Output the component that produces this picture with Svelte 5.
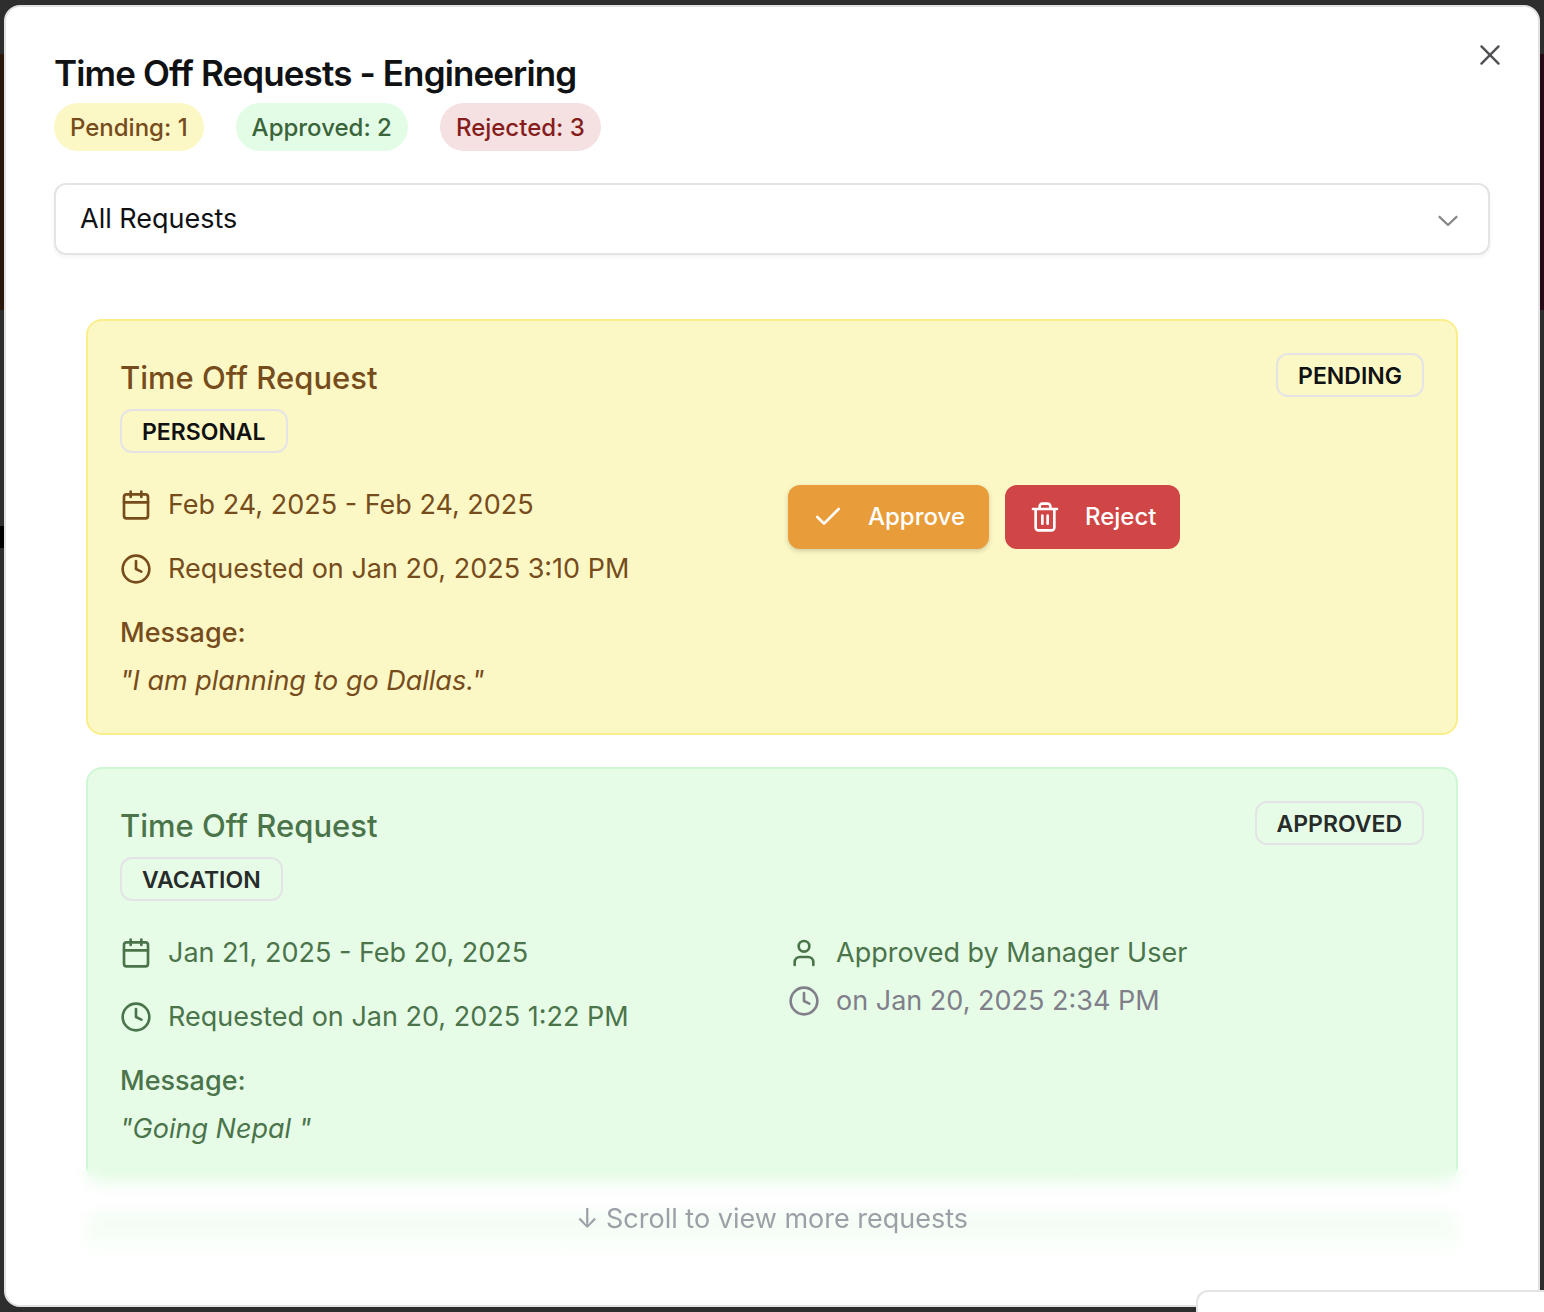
<script lang="ts">
  type Status = 'pending' | 'approved';
  type IconName = 'calendar' | 'clock' | 'user' | 'check' | 'trash';

  const counts = [
    { tone: 'pending', label: 'Pending: 1' },
    { tone: 'approved', label: 'Approved: 2' },
    { tone: 'rejected', label: 'Rejected: 3' }
  ];

  const requests: {
    status: Status;
    kind: string;
    dates: string;
    requested: string;
    message: string;
    reviewer?: string;
    reviewed?: string;
  }[] = [
    {
      status: 'pending',
      kind: 'PERSONAL',
      dates: 'Feb 24, 2025 - Feb 24, 2025',
      requested: 'Requested on Jan 20, 2025 3:10 PM',
      message: '"I am planning to go Dallas."'
    },
    {
      status: 'approved',
      kind: 'VACATION',
      dates: 'Jan 21, 2025 - Feb 20, 2025',
      requested: 'Requested on Jan 20, 2025 1:22 PM',
      message: '"Going Nepal "',
      reviewer: 'Approved by Manager User',
      reviewed: 'on Jan 20, 2025 2:34 PM'
    }
  ];

  let filter = $state('all');
</script>

{#snippet icon(name: IconName)}
  <svg class="icon" viewBox="0 0 24 24" aria-hidden="true">
    {#if name === 'calendar'}
      <path d="M8 2v4M16 2v4M3 10h18" />
      <rect x="3" y="4" width="18" height="18" rx="2" />
    {:else if name === 'clock'}
      <circle cx="12" cy="12" r="10" />
      <path d="M12 6v6l4 2" />
    {:else if name === 'user'}
      <path d="M19 21v-2a4 4 0 0 0-4-4H9a4 4 0 0 0-4 4v2" />
      <circle cx="12" cy="7" r="4" />
    {:else if name === 'check'}
      <path d="M20 6 9 17l-5-5" />
    {:else}
      <path d="M3 6h18M19 6v14c0 1-1 2-2 2H7c-1 0-2-1-2-2V6M8 6V4c0-1 1-2 2-2h4c1 0 2 1 2 2v2M10 11v6M14 11v6" />
    {/if}
  </svg>
{/snippet}

<div class="page">
  <div class="dialog" role="dialog" aria-modal="true" aria-labelledby="dialog-title">
    <h1 id="dialog-title">Time Off Requests - Engineering</h1>
    <div class="counts">
      {#each counts as count}
        <span class="pill {count.tone}">{count.label}</span>
      {/each}
    </div>

    <div class="filter">
      <select aria-label="Filter requests" bind:value={filter}>
        <option value="all">All Requests</option>
      </select>
      <svg class="chevron" viewBox="0 0 15 15" aria-hidden="true">
        <path d="M3.135 6.158c.189-.201.505-.212.707-.023L7.5 9.565l3.658-3.43c.202-.189.518-.178.707.023.189.202.178.518-.023.707l-4 3.75a.5.5 0 0 1-.684 0l-4-3.75c-.201-.189-.212-.505-.023-.707Z" />
      </svg>
    </div>

    <div class="viewport">
      <div class="list">
        {#each requests as request}
          <article class="card {request.status}">
            <header>
              <div class="heading">
                <h2>Time Off Request</h2>
                <span class="badge">{request.kind}</span>
              </div>
              <span class="badge">{request.status.toUpperCase()}</span>
            </header>
            <div class="columns">
              <div class="details">
                <p class="line">{@render icon('calendar')}{request.dates}</p>
                <p class="line">{@render icon('clock')}{request.requested}</p>
                <div class="message">
                  <p class="label">Message:</p>
                  <p class="quote">{request.message}</p>
                </div>
              </div>
              {#if request.status === 'pending'}
                <div class="actions">
                  <button class="approve" type="button">{@render icon('check')}Approve</button>
                  <button class="reject" type="button">{@render icon('trash')}Reject</button>
                </div>
              {:else}
                <div class="review">
                  <p class="line">{@render icon('user')}{request.reviewer}</p>
                  <p class="line muted">{@render icon('clock')}{request.reviewed}</p>
                </div>
              {/if}
            </div>
          </article>
        {/each}
        <div class="card approved next" aria-hidden="true"></div>
      </div>
      <div class="fade">↓ Scroll to view more requests</div>
    </div>

    <button class="close" type="button" aria-label="Close">
      <svg viewBox="0 0 15 15" aria-hidden="true">
        <path d="M3.5 3.5l8 8M11.5 3.5l-8 8" />
      </svg>
    </button>
  </div>
  <div class="toast" role="status"></div>
</div>

<style>
  :global(body) {
    margin: 0;
  }
  .page,
  .page * {
    box-sizing: border-box;
  }
  .page {
    height: 100vh;
    padding: 5px 4px;
    overflow: hidden;
    font-family: Inter, 'Liberation Sans', sans-serif;
    font-size: 27px;
    line-height: 40px;
    color: #101113;
    background:
      linear-gradient(#000, #000) 0 526px / 4px 22px no-repeat,
      linear-gradient(#2c170c, #2c170c) 0 54px / 50% 256px no-repeat,
      linear-gradient(#280a16, #280a16) 100% 54px / 50% 256px no-repeat,
      #2e2e2e;
  }
  h1,
  h2,
  p {
    margin: 0;
  }
  .dialog {
    position: relative;
    display: flex;
    flex-direction: column;
    height: 100%;
    padding: 48px 48px 40px;
    border: 2px solid #e2e2e4;
    border-radius: 16px;
    background: #fff;
  }
  h1 {
    font-size: 35px;
    line-height: 36px;
    font-weight: 600;
    letter-spacing: -0.025em;
  }
  .counts {
    display: flex;
    gap: 32px;
    margin-top: 12px;
  }
  .pill {
    padding: 9px 16px 7px;
    border-radius: 24px;
    font-size: 24px;
    line-height: 32px;
    font-weight: 500;
  }
  .pill.pending {
    color: #774c1c;
    background: #fcf8c5;
  }
  .pill.approved {
    color: #3a643a;
    background: #e3fce6;
  }
  .pill.rejected {
    color: #861d1d;
    background: #f5e1e1;
  }
  .filter {
    display: grid;
    align-items: center;
    margin-top: 32px;
  }
  .filter > * {
    grid-area: 1 / 1;
  }
  select {
    appearance: none;
    width: 100%;
    height: 72px;
    padding: 0 64px 0 24px;
    border: 2px solid #e4e4e7;
    border-radius: 12px;
    background: transparent;
    box-shadow: 0 2px 4px rgba(0, 0, 0, 0.05);
    font: inherit;
    color: inherit;
  }
  .chevron {
    justify-self: end;
    width: 32px;
    height: 32px;
    margin-right: 26px;
    fill: currentColor;
    opacity: 0.5;
    pointer-events: none;
  }
  .viewport {
    position: relative;
    flex: 1;
    min-height: 0;
    margin-top: 32px;
  }
  .list {
    display: flex;
    flex-direction: column;
    gap: 32px;
    height: 100%;
    padding: 32px 32px 0;
    overflow: hidden;
  }
  .card {
    flex: none;
    padding: 32px;
    border: 2px solid;
    border-radius: 16px;
  }
  .card.pending {
    color: #774c1c;
    border-color: #faee8c;
    background: #fcf8c5;
  }
  .card.approved {
    color: #4b744b;
    border-color: #cff7d3;
    background: #e6fce7;
  }
  .next {
    height: 416px;
  }
  header {
    display: flex;
    justify-content: space-between;
    align-items: flex-start;
  }
  .heading {
    display: flex;
    flex-direction: column;
    align-items: flex-start;
    gap: 6px;
  }
  h2 {
    font-size: 31px;
    line-height: 50px;
    font-weight: 500;
  }
  .badge {
    padding: 5px 20px 3px;
    border: 2px solid #e4e4e7;
    border-radius: 12px;
    font-size: 23px;
    line-height: 32px;
    font-weight: 600;
    color: #101113;
  }
  .approved .badge {
    color: #272b29;
  }
  .columns {
    display: grid;
    grid-template-columns: 1fr 1fr;
    gap: 32px;
    margin-top: 32px;
  }
  .details {
    display: flex;
    flex-direction: column;
    gap: 24px;
  }
  .line {
    display: flex;
    align-items: center;
    gap: 16px;
  }
  .icon {
    flex: none;
    width: 32px;
    height: 32px;
    fill: none;
    stroke: currentColor;
    stroke-width: 2;
    stroke-linecap: round;
    stroke-linejoin: round;
  }
  .message,
  .review {
    display: flex;
    flex-direction: column;
    gap: 8px;
  }
  .label {
    font-weight: 500;
  }
  .quote {
    font-style: italic;
  }
  .muted {
    color: #807f8a;
  }
  .actions {
    display: flex;
    align-items: flex-start;
    gap: 16px;
  }
  .actions button {
    display: flex;
    align-items: center;
    gap: 24px;
    height: 64px;
    padding: 0 24px;
    border: 0;
    border-radius: 12px;
    font: inherit;
    font-size: 24px;
    font-weight: 500;
    color: #fff;
  }
  .approve {
    background: #e89d3a;
    box-shadow: 0 2px 5px rgba(0, 0, 0, 0.18);
  }
  .reject {
    background: #d04545;
  }
  .fade {
    position: absolute;
    inset: auto 0 0;
    height: 96px;
    padding-top: 30px;
    text-align: center;
    color: #9c9fa6;
    background: linear-gradient(to bottom, transparent, #fff);
    backdrop-filter: blur(8px);
  }
  .close {
    position: absolute;
    top: 32px;
    right: 32px;
    display: flex;
    padding: 0;
    border: 0;
    background: none;
    color: #505154;
  }
  .close svg {
    width: 32px;
    height: 32px;
    fill: none;
    stroke: currentColor;
    stroke-width: 1.15;
    stroke-linecap: round;
  }
  .toast {
    position: fixed;
    right: -16px;
    bottom: -16px;
    width: 364px;
    height: 38px;
    border: 2px solid #e4e4e7;
    border-radius: 12px;
    background: #fff;
  }
</style>
